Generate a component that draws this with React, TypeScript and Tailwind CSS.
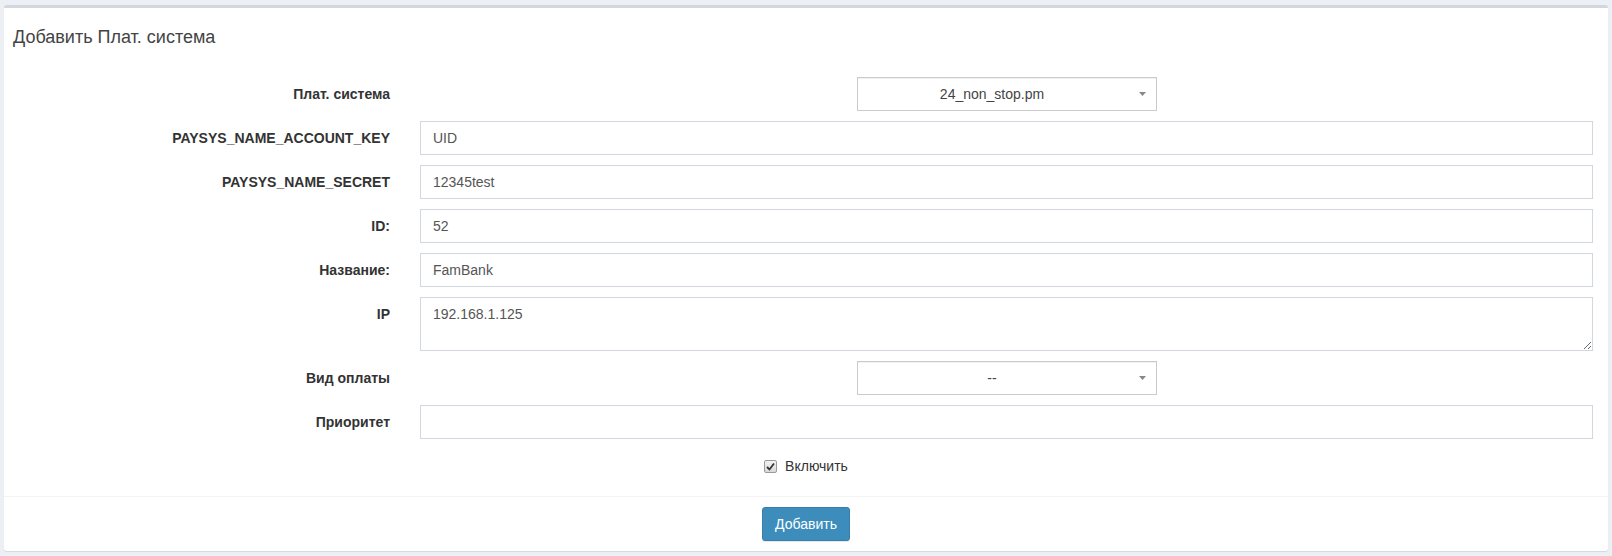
import React from 'react';

const font = "font-['Liberation_Sans',Arial,sans-serif]";

function Label({ children }: { children: React.ReactNode }) {
    return (
        <div className="w-[401px] shrink-0 pr-[15px] pt-[7px] text-right text-[14px] leading-[20px] font-bold text-[#333]">
            {children}
        </div>
    );
}

function TextInput({ value }: { value: string }) {
    return (
        <input
            type="text"
            defaultValue={value}
            className="h-[34px] w-full border border-[#d2d6de] bg-white px-[12px] text-[14px] text-[#555] outline-none"
        />
    );
}

function Select({ value }: { value: string }) {
    return (
        <div className="mx-auto flex h-[34px] w-[300px] items-center border border-[#cbcbcb] bg-white shadow-[inset_0_1px_0_#f1f1f1]">
            <span className="flex-1 pl-[8px] pr-[20px] text-center text-[14px] text-[#444]">{value}</span>
            <svg width="7" height="4" viewBox="0 0 7 4" className="mr-[10px] mb-[1px]">
                <path d="M0 0 L7 0 L3.5 4 Z" fill="#888" />
            </svg>
        </div>
    );
}

export default function App() {
    return (
        <div className={`${font} h-[556px] bg-[#ecf0f5] px-[4px] pt-[5px]`}>
            <div className="rounded-[3px] border-t-[3px] border-[#d2d6de] bg-white shadow-[0_1px_1px_rgba(0,0,0,0.1)]">
                {/* header */}
                <div className="px-[9px] pt-[19px]">
                    <h3 className="text-[18px] leading-[20px] text-[#444]">Добавить Плат. система</h3>
                </div>

                {/* form */}
                <div className="flex flex-col gap-[10px] pt-[30px]">
                    <div className="flex items-start">
                        <Label>Плат. система</Label>
                        <div className="flex-1 px-[15px]">
                            <Select value="24_non_stop.pm" />
                        </div>
                    </div>
                    <div className="flex items-start">
                        <Label>PAYSYS_NAME_ACCOUNT_KEY</Label>
                        <div className="flex-1 px-[15px]">
                            <TextInput value="UID" />
                        </div>
                    </div>
                    <div className="flex items-start">
                        <Label>PAYSYS_NAME_SECRET</Label>
                        <div className="flex-1 px-[15px]">
                            <TextInput value="12345test" />
                        </div>
                    </div>
                    <div className="flex items-start">
                        <Label>ID:</Label>
                        <div className="flex-1 px-[15px]">
                            <TextInput value="52" />
                        </div>
                    </div>
                    <div className="flex items-start">
                        <Label>Название:</Label>
                        <div className="flex-1 px-[15px]">
                            <TextInput value="FamBank" />
                        </div>
                    </div>
                    <div className="flex items-start">
                        <Label>IP</Label>
                        <div className="flex-1 px-[15px]">
                            <textarea
                                defaultValue="192.168.1.125"
                                className="block h-[54px] w-full border border-[#d2d6de] bg-white px-[12px] py-[6px] text-[14px] leading-[20px] text-[#555] outline-none"
                            />
                        </div>
                    </div>
                    <div className="flex items-start">
                        <Label>Вид оплаты</Label>
                        <div className="flex-1 px-[15px]">
                            <Select value="--" />
                        </div>
                    </div>
                    <div className="flex items-start">
                        <Label>Приоритет</Label>
                        <div className="flex-1 px-[15px]">
                            <TextInput value="" />
                        </div>
                    </div>
                </div>

                <div className="mt-[17px] flex h-[20px] items-center justify-center gap-[8px]">
                    <span className="flex h-[13px] w-[13px] items-center justify-center rounded-[2px] border border-[#9a9a9a] bg-gradient-to-b from-[#f2f2f2] to-[#d9d9d9]">
                        <svg width="9" height="9" viewBox="0 0 9 9">
                            <path d="M1 5 L3.5 7.5 L8 1.5" fill="none" stroke="#333" strokeWidth="1.8" />
                        </svg>
                    </span>
                    <span className="text-[14px] text-[#333]">Включить</span>
                </div>

                {/* footer */}
                <div className="mt-[20px] flex justify-center border-t border-[#f4f4f4] py-[10px]">
                    <button className="h-[34px] rounded-[3px] border border-[#367fa9] bg-[#3c8dbc] px-[12px] text-[14px] text-white shadow-[0_1px_1px_rgba(0,0,0,0.1)]">
                        Добавить
                    </button>
                </div>
            </div>
        </div>
    );
}
